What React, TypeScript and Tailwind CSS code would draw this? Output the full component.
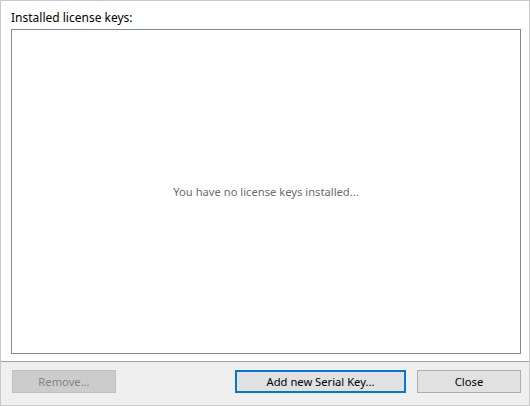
export default function App() {
  return (
    <div
      className="flex h-[406px] w-[530px] flex-col border border-[#c9c9c9] bg-white text-[11.2px]"
      style={{ fontFamily: '"Segoe UI", "Noto Sans", "Open Sans", sans-serif' }}
    >
      <div className="flex flex-1 flex-col pb-[7px] pl-[10px] pr-[8px]">
        <div className="h-[28px] pt-[9px] text-[12px] leading-[16px] text-black">Installed license keys:</div>
        <div className="flex flex-1 items-center justify-center border border-[#828790] bg-white pt-[1px]">
          <span className="text-[#6d6d6d]">You have no license keys installed...</span>
        </div>
      </div>
      <div className="flex h-[44px] items-start border-t border-[#a0a0a0] bg-[#efefef] pl-[11px] pr-[8px] pt-[8px]">
        <button className="h-[23px] w-[104px] border border-[#bfbfbf] bg-[#cccccc] pt-[1px] text-[#838383]">
          Remove...
        </button>
        <button className="ml-auto h-[23px] w-[171px] border-2 border-[#0078d7] bg-[#e1e1e1] pt-[1px] text-black">
          Add new Serial Key...
        </button>
        <button className="ml-[11px] h-[23px] w-[104px] border border-[#adadad] bg-[#e1e1e1] pt-[1px] text-black">
          Close
        </button>
      </div>
    </div>
  )
}
